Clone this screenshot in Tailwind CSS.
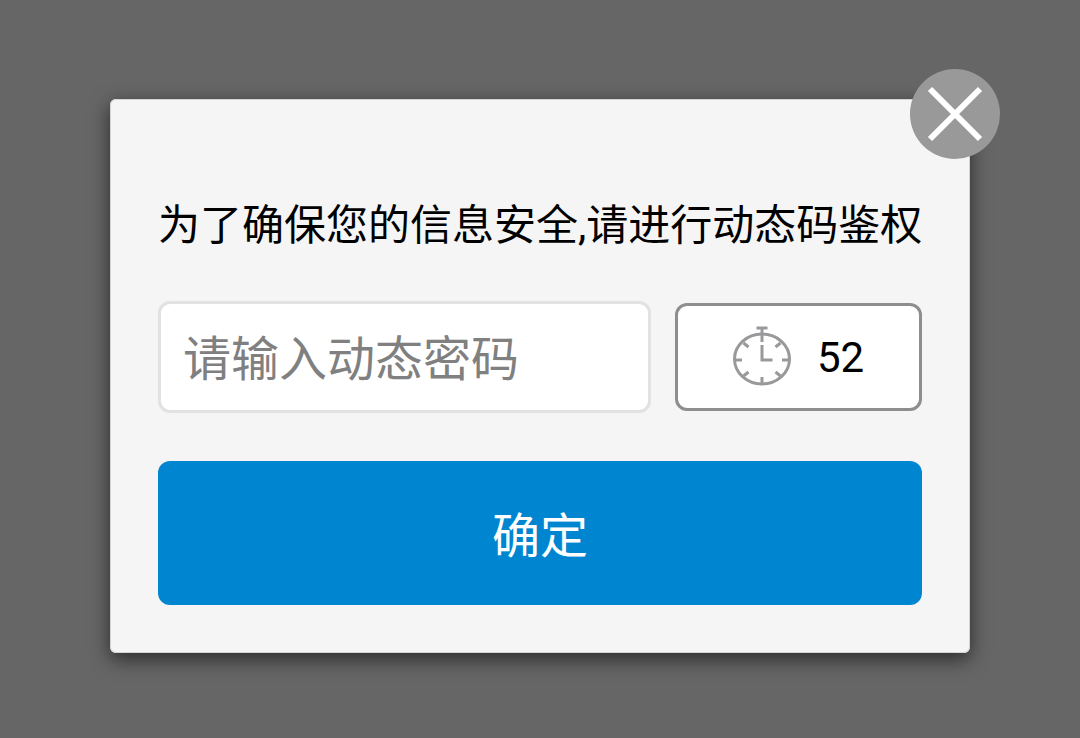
<!DOCTYPE html>
<html lang="zh-CN">
<head>
  <meta charset="UTF-8" />
  <meta name="viewport" content="width=device-width, initial-scale=1.0" />
  <title>动态码鉴权</title>
  <script src="https://cdn.jsdelivr.net/npm/@tailwindcss/browser@4"></script>
</head>
<body class="bg-[#666666] text-black min-h-screen flex items-center justify-center px-[110px] pt-3.5 font-[Roboto,'Noto_Sans_CJK_SC',sans-serif]">
  <!-- Dialog -->
  <main class="relative w-full max-w-4xl bg-[#f5f5f6] rounded-md px-12 pt-[98px] pb-12 shadow-[inset_0_0_0_1px_#d4d4d4,0_6px_20px_rgba(0,0,0,0.6)]">
    <!-- Close button -->
    <button type="button" aria-label="关闭" class="absolute -top-[30px] -right-[30px] size-[90px] rounded-full bg-[#999999] flex items-center justify-center">
      <svg class="size-14" viewBox="0 0 56 56" fill="none" stroke="#fff" stroke-width="6">
        <path d="M3 3L53 53M53 3L3 53" />
      </svg>
    </button>

    <form onsubmit="return false">
      <label for="code" class="block text-[42px] leading-[58px] text-center whitespace-nowrap">为了确保您的信息安全,请进行动态码鉴权</label>

      <div class="mt-[46px] flex items-center gap-6">
        <input id="code" type="text" placeholder="请输入动态密码" class="flex-1 min-w-0 h-28 bg-white border-[3px] border-[#e2e2e4] rounded-xl px-[22px] pt-1 text-5xl placeholder:text-[#808080]" />
        <button type="button" class="w-[247px] h-[108px] bg-white border-[3px] border-[#8e8e90] rounded-xl flex items-center justify-center gap-6 text-[42px]">
          <!-- Stopwatch -->
          <svg class="w-[60px] h-[62px]" viewBox="0 0 60 62" fill="none" stroke="#99999b" stroke-width="3">
            <ellipse cx="29" cy="33" rx="27.500" ry="25" />
            <path d="M23.500 2H34.500M29 2V16" />
            <path d="M29 19V34H39.500" />
            <path d="M3 34H9M49 34H55M29 51V57M10.500 17L15.500 21M47.500 17L42.500 21M10.500 50L15.500 46M47.500 50L42.500 46" />
          </svg>
          <span id="count">52</span>
        </button>
      </div>

      <button type="submit" class="mt-12 w-full h-36 pt-2 bg-[#0085d0] text-white text-5xl rounded-xl">确定</button>
    </form>
  </main>
</body>
</html>
